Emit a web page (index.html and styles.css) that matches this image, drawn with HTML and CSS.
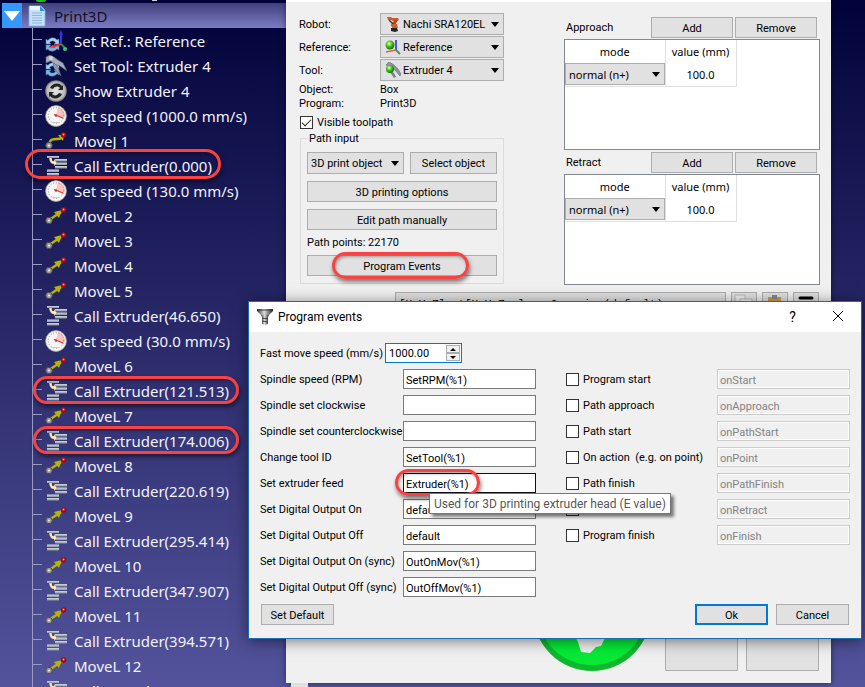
FILE: index.html
```
<!DOCTYPE html>
<html lang="en">
<head>
	<meta charset="UTF-8">
	<meta name="viewport" content="width=device-width, initial-scale=1.0">
	<title>Program events</title>
	<link rel="stylesheet" href="styles.css">
</head>
<body>
	<!-- shared icons -->
	<svg class="defs" width="0" height="0" aria-hidden="true">
		<defs>
			<linearGradient id="bar" x1="0" y1="0" x2="0" y2="1">
				<stop offset="0" stop-color="#d3dae2"/>
				<stop offset="1" stop-color="#8a949e"/>
			</linearGradient>
			<linearGradient id="metal" x1="0" y1="0" x2="1" y2="0">
				<stop offset="0" stop-color="#333"/>
				<stop offset=".45" stop-color="#ddd"/>
				<stop offset="1" stop-color="#222"/>
			</linearGradient>
			<radialGradient id="silver">
				<stop offset="0" stop-color="#e8e8e8"/>
				<stop offset=".8" stop-color="#bbb"/>
				<stop offset="1" stop-color="#777"/>
			</radialGradient>
			<radialGradient id="ball" cx=".4" cy=".35" r=".6">
				<stop offset="0" stop-color="#eaffd0"/>
				<stop offset=".5" stop-color="#4fc81e"/>
				<stop offset="1" stop-color="#1d7a08"/>
			</radialGradient>
		</defs>
		<symbol id="i-cycle" viewBox="0 0 22 22">
			<path d="M1 14V9l2 1.500C5 7 10 7 12 10l2-1v5H9l1.500-1.500C9 10.500 6 10.500 4.500 12.500L6 14z" fill="#a9d2ef" stroke="#3d7fae" stroke-width=".5"/>
			<path d="M14 15v5l-2-1.200C10 22 4 22 3 19l-2 1v-5h5l-1.500 1.500c1.500 2 4.500 2 6 0L9 15z" fill="#7fb5dd" stroke="#3d7fae" stroke-width=".5"/>
		</symbol>
		<symbol id="i-ref" viewBox="0 0 22 22">
			<use href="#i-cycle"/>
			<path d="M16 14V3" stroke="#2a35ee" stroke-width="2"/>
			<path d="M16 0l2 5h-4z" fill="#2a35ee"/>
			<path d="M16 14L7 17" stroke="#e33" stroke-width="2"/>
			<path d="M3 18l5-3 1 3z" fill="#f44"/>
			<path d="M16 14l5 5" stroke="#2a8a5a" stroke-width="2"/>
			<circle cx="20" cy="19" r="2" fill="#3fc37c"/>
		</symbol>
		<symbol id="i-tool" viewBox="0 0 22 22">
			<use href="#i-cycle"/>
			<path d="M1 2l4-2 4 2 4 3 5 3 4 8-7-5-6-2-3-3-5 2z" fill="#a8abba" stroke="#555b70" stroke-width=".6"/>
			<path d="M9 8l4 4 3 9-5-5-3-5z" fill="#9499ad" stroke="#555b70" stroke-width=".6"/>
			<circle cx="6" cy="3" r="2" fill="#d4d6df"/>
		</symbol>
		<symbol id="i-show" viewBox="0 0 22 22">
			<circle cx="11" cy="11" r="10.800" fill="url(#silver)"/>
			<path d="M5 8c2-5 9-6 12-2l1-1v5h-5l2-2c-2-2-5-2-7 1z" fill="#222"/>
			<path d="M17 14c-2 5-9 6-12 2l-1 1v-5h5l-2 2c2 2 5 2 7-1z" fill="#222"/>
		</symbol>
		<symbol id="i-speed" viewBox="0 0 22 22">
			<circle cx="11" cy="11" r="10.400" fill="#f6f6f4" stroke="#aaa" stroke-width=".8"/>
			<path d="M11 10l2-8c6 1 8 7 6 12z" fill="#f9c4c4"/>
			<circle cx="11" cy="10.500" r="7.800" fill="none" stroke="#888" stroke-dasharray="1 1.800"/>
			<path d="M9 9.500l9 3.500" stroke="#d33" stroke-width="1.200"/>
			<circle cx="11" cy="10.500" r="1.200" fill="#c33"/>
			<path d="M7 17.500h8" stroke="#ccc"/>
		</symbol>
		<symbol id="i-movej" viewBox="0 0 22 22">
			<path d="M4 15c1-6 3-6 8-6 4 0 5-1 6-4" fill="none" stroke="#b8b400" stroke-width="2.500"/>
			<path d="M13 5l6 0-1 6z" fill="#b8b400"/>
			<circle cx="4" cy="15.500" r="3.200" fill="#999" stroke="#4c4c50"/>
			<circle cx="4" cy="15.500" r="1" fill="#eee"/>
			<circle cx="18.500" cy="5" r="2.800" fill="#a80a14"/>
			<circle cx="18.500" cy="4.500" r="1" fill="#f99"/>
		</symbol>
		<symbol id="i-movel" viewBox="0 0 22 22">
			<path d="M4 15l12-8" stroke="#b8b400" stroke-width="2.500"/>
			<path d="M9 7l8-2-3 8z" fill="#b8b400"/>
			<circle cx="4" cy="15.500" r="3.200" fill="#999" stroke="#4c4c50"/>
			<circle cx="4" cy="15.500" r="1" fill="#eee"/>
			<circle cx="18.500" cy="5" r="2.800" fill="#a80a14"/>
			<circle cx="18.500" cy="4.500" r="1" fill="#f99"/>
		</symbol>
		<symbol id="i-call" viewBox="0 0 22 22">
			<g fill="url(#bar)">
				<rect x="2" y="1" width="12" height="2"/>
				<rect x="10" y="4" width="12" height="2.500"/>
				<rect x="10" y="7.500" width="12" height="2.500"/>
				<rect x="10" y="11" width="12" height="2.500"/>
				<rect x="2" y="14.500" width="12" height="2.500"/>
				<rect x="2" y="18" width="12" height="2.500"/>
			</g>
			<path d="M4 3h3c0 3 0 3 2 3V4l3 4-3 3V9C6 9 5 7 4 3z" fill="#fdebc4" stroke="#6b5a3a" stroke-width=".3"/>
		</symbol>
		<symbol id="i-doc" viewBox="0 0 18 22">
			<path d="M1 1h12l4 4v16H1z" fill="#c5e2f8" stroke="#7db3dc" stroke-width=".8"/>
			<path d="M2 1h10v4H2z" fill="#e9f5ff"/>
			<path d="M12 1l5 5h-5z" fill="#2f8be8"/>
			<path d="M4 8h10M4 10.500h10M4 13h10M4 15.500h10M4 18h10" stroke="#8fb5d8"/>
		</symbol>
		<symbol id="i-robot" viewBox="0 0 16 16">
			<path d="M2 1h4l1 1h6l1 2-2 1H8L6 4H3z" fill="#c9602f"/>
			<path d="M11 3l2 1-3 5-4 1 1-3z" fill="#b0481f"/>
			<path d="M4 4l4 4" stroke="#5b2a18" stroke-width="1.500"/>
			<path d="M6 8h6l1 4H7z" fill="#c9602f"/>
			<path d="M6 12h6l1 3-3 1-4-1z" fill="#222"/>
		</symbol>
		<symbol id="i-frame" viewBox="0 0 16 16">
			<path d="M11 11V1" stroke="#4a55e0" stroke-width="2"/>
			<path d="M11 11L1 13" stroke="#e55" stroke-width="1.500"/>
			<path d="M11 11l4 4" stroke="#3a9a6a" stroke-width="2"/>
			<circle cx="5" cy="6" r="4.500" fill="url(#ball)"/>
		</symbol>
		<symbol id="i-grip" viewBox="0 0 16 16">
			<path d="M1 3l3-3 5 3 4 4 3 5-1 2-5-6-5-3z" fill="#8e93a6" stroke="#5a6074" stroke-width=".6"/>
			<path d="M6 9l3 2 2 4-2 1-4-6z" fill="#777d92"/>
			<circle cx="5" cy="7" r="4" fill="url(#ball)"/>
		</symbol>
	</svg>

	<div class="desktop">
		<nav class="tree">
			<div class="above"><i></i><b></b></div>
			<div class="root">
				<button class="toggle" aria-label="Collapse"></button>
				<div class="selected">
					<svg class="doc"><use href="#i-doc"/></svg>
					<span>Print3D</span>
				</div>
			</div>
			<ul>
				<li><svg><use href="#i-ref"/></svg>Set Ref.: Reference</li>
				<li><svg><use href="#i-tool"/></svg>Set Tool: Extruder 4</li>
				<li><svg><use href="#i-show"/></svg>Show Extruder 4</li>
				<li><svg><use href="#i-speed"/></svg>Set speed (1000.0 mm/s)</li>
				<li><svg><use href="#i-movej"/></svg>MoveJ 1</li>
				<li class="marked wide"><svg><use href="#i-call"/></svg>Call Extruder(0.000)</li>
				<li><svg><use href="#i-speed"/></svg>Set speed (130.0 mm/s)</li>
				<li><svg><use href="#i-movel"/></svg>MoveL 2</li>
				<li><svg><use href="#i-movel"/></svg>MoveL 3</li>
				<li><svg><use href="#i-movel"/></svg>MoveL 4</li>
				<li><svg><use href="#i-movel"/></svg>MoveL 5</li>
				<li><svg><use href="#i-call"/></svg>Call Extruder(46.650)</li>
				<li><svg><use href="#i-speed"/></svg>Set speed (30.0 mm/s)</li>
				<li><svg><use href="#i-movel"/></svg>MoveL 6</li>
				<li class="marked"><svg><use href="#i-call"/></svg>Call Extruder(121.513)</li>
				<li><svg><use href="#i-movel"/></svg>MoveL 7</li>
				<li class="marked"><svg><use href="#i-call"/></svg>Call Extruder(174.006)</li>
				<li><svg><use href="#i-movel"/></svg>MoveL 8</li>
				<li><svg><use href="#i-call"/></svg>Call Extruder(220.619)</li>
				<li><svg><use href="#i-movel"/></svg>MoveL 9</li>
				<li><svg><use href="#i-call"/></svg>Call Extruder(295.414)</li>
				<li><svg><use href="#i-movel"/></svg>MoveL 10</li>
				<li><svg><use href="#i-call"/></svg>Call Extruder(347.907)</li>
				<li><svg><use href="#i-movel"/></svg>MoveL 11</li>
				<li><svg><use href="#i-call"/></svg>Call Extruder(394.571)</li>
				<li><svg><use href="#i-movel"/></svg>MoveL 12</li>
				<li><svg><use href="#i-call"/></svg>Call Extruder(438.515)</li>
			</ul>
		</nav>

		<div class="right">
			<main class="panel">
				<div class="columns">
					<section class="setup">
						<div class="fields">
							<label for="robot">Robot:</label>
							<div class="combo icon">
								<svg><use href="#i-robot"/></svg>
								<select id="robot"><option>Nachi SRA120EL</option></select>
							</div>
							<label for="reference">Reference:</label>
							<div class="combo icon">
								<svg><use href="#i-frame"/></svg>
								<select id="reference"><option>Reference</option></select>
							</div>
							<label for="tool">Tool:</label>
							<div class="combo icon">
								<svg><use href="#i-grip"/></svg>
								<select id="tool"><option>Extruder 4</option></select>
							</div>
						</div>
						<div class="fields facts">
							<span>Object:</span><span>Box</span>
							<span>Program:</span><span>Print3D</span>
						</div>
						<label class="check"><input type="checkbox" checked>Visible toolpath</label>
						<fieldset>
							<legend>Path input</legend>
							<div class="pair">
								<div class="combo">
									<select aria-label="Path input type"><option>3D print object</option></select>
								</div>
								<button>Select object</button>
							</div>
							<button>3D printing options</button>
							<button>Edit path manually</button>
							<p>Path points: 22170</p>
							<button class="events">Program Events</button>
						</fieldset>
					</section>

					<section class="moves">
						<div class="head">
							<h2>Approach</h2>
							<button>Add</button>
							<button>Remove</button>
						</div>
						<div class="box">
							<table>
								<tr><th>mode</th><th>value (mm)</th></tr>
								<tr>
									<td><div class="combo"><select aria-label="Approach mode"><option>normal (n+)</option></select></div></td>
									<td>100.0</td>
								</tr>
							</table>
						</div>
						<div class="head">
							<h2>Retract</h2>
							<button>Add</button>
							<button>Remove</button>
						</div>
						<div class="box">
							<table>
								<tr><th>mode</th><th>value (mm)</th></tr>
								<tr>
									<td><div class="combo"><select aria-label="Retract mode"><option>normal (n+)</option></select></div></td>
									<td>100.0</td>
								</tr>
							</table>
						</div>
					</section>
				</div>

				<div class="config">
					<select class="mono" aria-label="Configuration"><option>[X,Y,Z]rot[X,Y,Z,w]... Generic (default)</option></select>
					<button aria-label="Copy"><svg viewBox="0 0 20 20"><path d="M1 1h10v12H1z" fill="#eee" stroke="#bbb"/><path d="M6 5h12v13H6z" fill="#f5f5f5" stroke="#bbb"/></svg></button>
					<button aria-label="Paste"><svg viewBox="0 0 20 20"><path d="M3 3h13v15H3z" fill="#d39a4e"/><path d="M7 1h5v4H7z" fill="#888"/><path d="M8 8h9v10H8z" fill="#fff"/></svg></button>
					<button aria-label="Remove configuration"><svg viewBox="0 0 20 20"><path d="M4 4h12" stroke="#000" stroke-width="3" stroke-linecap="round"/></svg></button>
				</div>

				<div class="foot">
					<svg class="go" viewBox="0 0 118 118">
						<circle cx="59" cy="59" r="59" fill="#0fb92e"/>
						<circle cx="59" cy="57" r="55" fill="#06ea36"/>
						<path d="M40 80l5 9 3 10 9 1 6-6 5-1 4-8-1-5z" fill="#efefef"/>
					</svg>
					<button aria-label="Update"></button>
					<button aria-label="Simulate"></button>
				</div>
			</main>
			<div class="peek"></div>
		</div>

		<div class="dialog" role="dialog" aria-labelledby="title">
			<header>
				<svg viewBox="0 0 16 16">
					<path d="M0 0h16v2l-4 4H4L0 2z" fill="url(#metal)"/>
					<path d="M4 6h8l-1 2v7l-3 1-3-1V8z" fill="url(#metal)"/>
					<path d="M0 1h16M5 9l6 1M5 12l6 1" stroke="#222" stroke-width=".8"/>
				</svg>
				<h1 id="title">Program events</h1>
				<button aria-label="Help">?</button>
				<button aria-label="Close"><svg viewBox="0 0 12 12"><path d="M1 1l10 10M11 1L1 11" stroke="#000"/></svg></button>
			</header>
			<form>
				<div class="speed">
					<label for="fast">Fast move speed (mm/s)</label>
					<div class="spin">
						<input id="fast" type="number" step="0.01" value="1000.00">
						<div>
							<button type="button" class="up" aria-label="Increase"></button>
							<button type="button" class="down" aria-label="Decrease"></button>
						</div>
					</div>
				</div>
				<div class="sets">
					<div class="commands">
						<label for="rpm">Spindle speed (RPM)</label><input id="rpm" type="text" value="SetRPM(%1)">
						<label for="cw">Spindle set clockwise</label><input id="cw" type="text">
						<label for="ccw">Spindle set counterclockwise</label><input id="ccw" type="text">
						<label for="toolid">Change tool ID</label><input id="toolid" type="text" value="SetTool(%1)">
						<label for="feed">Set extruder feed</label>
						<div class="feed">
							<input id="feed" type="text" value="Extruder(%1)">
							<div class="tip" role="tooltip">Used for 3D printing extruder head (E value)</div>
						</div>
						<label for="don">Set Digital Output On</label><input id="don" type="text" value="default">
						<label for="doff">Set Digital Output Off</label><input id="doff" type="text" value="default">
						<label for="dons">Set Digital Output On (sync)</label><input id="dons" type="text" value="OutOnMov(%1)">
						<label for="doffs">Set Digital Output Off (sync)</label><input id="doffs" type="text" value="OutOffMov(%1)">
					</div>
					<div class="hooks">
						<label class="check"><input type="checkbox">Program start</label><input type="text" value="onStart" aria-label="Program start call" disabled>
						<label class="check"><input type="checkbox">Path approach</label><input type="text" value="onApproach" aria-label="Path approach call" disabled>
						<label class="check"><input type="checkbox">Path start</label><input type="text" value="onPathStart" aria-label="Path start call" disabled>
						<label class="check"><input type="checkbox">On action&nbsp; (e.g. on point)</label><input type="text" value="onPoint" aria-label="On action call" disabled>
						<label class="check"><input type="checkbox">Path finish</label><input type="text" value="onPathFinish" aria-label="Path finish call" disabled>
						<label class="check"><input type="checkbox" aria-label="Retract"></label><input type="text" value="onRetract" aria-label="Retract call" disabled>
						<label class="check"><input type="checkbox">Program finish</label><input type="text" value="onFinish" aria-label="Program finish call" disabled>
					</div>
				</div>
				<div class="actions">
					<button type="button">Set Default</button>
					<button type="button" class="ok">Ok</button>
					<button type="button">Cancel</button>
				</div>
			</form>
		</div>
	</div>
</body>
</html>
```
FILE: styles.css
```
*{
	margin:0;
	padding:0;
	box-sizing: border-box;
}
body{
	font-family: Roboto, "Noto Sans", sans-serif;
	font-size: 11px;
	color: #000;
}
input, select, button{
	font: inherit;
	color: inherit;
}
.defs{
	position: absolute;
}
.desktop{
	position: relative;
	display: flex;
	height: 100vh;
	overflow: hidden;
	background: linear-gradient(#02023a, #53539c);
}

/* station tree */
.tree{
	flex: none;
	width: 286px;
	font-family: "Noto Sans", "Open Sans", sans-serif;
	font-size: 15px;
	color: #f2f2f8;
}
.above{
	display: flex;
	height: 3px;
	padding-left: 36px;
	overflow: hidden;
}
.above i{
	width: 10px;
	height: 2px;
	border-radius: 0 0 6px 6px;
	background: #10c010;
}
.above b{
	width: 5px;
	height: 1px;
	margin-left: 106px;
	background: #ccd;
}
.root{
	display: flex;
	height: 25px;
	padding-left: 2px;
}
.toggle{
	width: 20px;
	height: 25px;
	border: none;
	background: #3399ff;
}
.toggle::before{
	content: "";
	display: block;
	margin: 0 auto;
	width: 0;
	border: 8px solid transparent;
	border-top: 10px solid #fff;
	border-bottom: none;
}
.selected{
	flex: 1;
	display: flex;
	align-items: center;
	gap: 8px;
	padding-left: 6px;
	background: linear-gradient(#40407c, #7c7cc4);
	color: #111122;
}
.doc{
	width: 18px;
	height: 22px;
}
.tree ul{
	list-style: none;
	margin-left: 32px;
	border-left: 1px solid #9a9ac0;
}
.tree li{
	position: relative;
	display: flex;
	align-items: center;
	height: 25px;
	white-space: nowrap;
}
.tree li::before{
	content: "";
	width: 9px;
	height: 1px;
	margin-right: 3px;
	margin-bottom: 2px;
	background: #9a9ac0;
}
.tree li svg{
	width: 22px;
	height: 22px;
	margin-right: 7px;
}

/* red call-outs */
.marked::after, .events::after, .feed::after{
	content: "";
	position: absolute;
	box-sizing: border-box;
	border: 3px solid #f94242;
	border-radius: 15px;
	box-shadow: 1px 3px 4px rgba(0,0,0,.5), inset 1px 2px 3px rgba(0,0,0,.3);
	pointer-events: none;
}
.tree .marked::after{
	top: -2px;
	bottom: -1px;
	left: 0;
	width: 206px;
}
.tree .wide::after{
	top: -4px;
	left: -8px;
	width: 196px;
}

/* print project panel */
.right{
	flex: 1;
	display: flex;
	flex-direction: column;
	margin-right: 34px;
}
.panel{
	flex: 1;
	display: flex;
	flex-direction: column;
	border-top: 2px solid #fff;
	background: #f0f0f0;
	box-shadow: 0 0 6px rgba(0,0,0,.5);
}
.peek{
	width: 17px;
	height: 4px;
	margin-left: 5px;
	background: #e0e0e0;
}
.columns{
	display: flex;
	justify-content: space-between;
	padding: 11px 11px 0 13px;
}
.setup{
	width: 205px;
}
.fields{
	display: grid;
	grid-template-columns: 81px 1fr;
	row-gap: 1px;
	align-items: center;
}
.facts{
	row-gap: 0;
	line-height: 14px;
	padding: 2px 0 4px;
}
.combo{
	position: relative;
}
.combo::after{
	content: "";
	position: absolute;
	right: 5px;
	top: 9px;
	border: 4px solid transparent;
	border-top: 5px solid #000;
	border-bottom: none;
	pointer-events: none;
}
.combo svg{
	position: absolute;
	left: 5px;
	top: 3px;
	width: 16px;
	height: 16px;
}
select{
	display: block;
	width: 100%;
	height: 22px;
	padding: 1px 0 0 3px;
	border: 1px solid #adadad;
	background: #e1e1e1;
	appearance: none;
}
.icon select{
	padding-left: 22px;
}
button{
	height: 21px;
	padding-top: 1px;
	border: 1px solid #adadad;
	background: #e1e1e1;
}
.check{
	display: flex;
	align-items: center;
	gap: 4px;
	line-height: 15px;
	white-space: pre;
}
.check input{
	width: 13px;
	height: 13px;
	border: 1px solid #333;
	background: #fff;
	appearance: none;
}
.check input:checked::before{
	content: "";
	display: block;
	width: 8px;
	height: 4px;
	margin: 2px 1px;
	border-left: 1px solid #222;
	border-bottom: 1px solid #222;
	transform: rotate(-45deg);
}
.setup .check{
	margin-left: 1px;
}
fieldset{
	display: flex;
	flex-direction: column;
	gap: 7px;
	margin: 1px 0 0 1px;
	padding: 6px 6px 7px 6px;
	border: 1px solid #dcdcdc;
}
legend{
	margin-left: 1px;
	padding: 0 1px;
	line-height: 15px;
}
fieldset p{
	line-height: 11px;
}
.pair{
	display: flex;
	gap: 6px;
}
.pair > *{
	flex: 1 1 98px;
}
.pair button{
	flex-basis: 88px;
	height: 22px;
}
.events{
	position: relative;
}
.events::after{
	top: -4px;
	bottom: -4px;
	left: 24px;
	right: 27px;
}
.moves{
	width: 256px;
}
.head{
	display: flex;
	gap: 2px;
	padding: 4px 3px 1px 2px;
}
.head h2{
	flex: 1;
	font-size: 11px;
	font-weight: normal;
	line-height: 21px;
}
.head button{
	width: 82px;
}
.box{
	height: 111px;
	margin-bottom: -2px;
	border: 1px solid #828790;
	background: #fff;
	font-family: "Noto Sans", "Open Sans", sans-serif;
}
.box table{
	border-collapse: collapse;
	text-align: center;
}
.box th, .box td{
	height: 23px;
	font-weight: normal;
}
.box td:first-child{
	width: 100px;
	text-align: left;
}
.box select{
	padding-top: 0;
}
.box th:last-child, .box td:last-child{
	width: 71px;
	border: 1px solid #e0e0e0;
	border-width: 0 1px;
}
.box tr:last-child{
	border-bottom: 1px solid #e0e0e0;
}
.config{
	display: grid;
	grid-template-columns: 1fr 26px 26px 26px;
	gap: 5px;
	margin: 8px 12px 0 109px;
}
.config button svg{
	width: 20px;
	height: 20px;
}
.mono{
	font-family: "Liberation Mono", monospace;
}
.foot{
	flex: 1;
	display: flex;
	align-items: flex-end;
	gap: 8px;
	padding: 0 12px 12px 0;
}
.foot button{
	width: 73px;
	height: 60px;
}
.go{
	width: 118px;
	height: 118px;
	margin-left: auto;
	margin-right: 6px;
}

/* program events dialog */
.dialog{
	position: absolute;
	top: 301px;
	left: 248px;
	right: 3px;
	border: 1px solid #1a6cb0;
	background: #f0f0f0;
	box-shadow: 0 2px 14px rgba(0,0,0,.5);
}
.dialog header{
	display: flex;
	align-items: center;
	height: 30px;
	padding: 0 1px 0 8px;
	background: #fff;
}
.dialog header > svg{
	width: 16px;
	height: 16px;
	margin-right: 5px;
}
.dialog h1{
	flex: 1;
	font-size: 12px;
	font-weight: normal;
}
.dialog header button{
	width: 45px;
	height: 30px;
	padding: 0;
	border: none;
	background: none;
	font-size: 14px;
}
.dialog header button svg{
	width: 12px;
	height: 12px;
}
form{
	padding: 11px 11px 13px 11px;
}
form label{
	padding-top: 1px;
}
.speed{
	display: flex;
	align-items: center;
	gap: 2px;
	margin-bottom: 6px;
}
.spin{
	display: flex;
	width: 77px;
	height: 20px;
	padding: 1px;
	border: 1px solid #0078d7;
	background: #fff;
}
.spin input{
	flex: 1;
	min-width: 0;
	padding: 1px 0 0 2px;
	border: none;
	outline: none;
	appearance: textfield;
}
.spin input::-webkit-inner-spin-button{
	appearance: none;
}
.spin > div{
	display: flex;
	flex-direction: column;
}
.spin button{
	width: 14px;
	height: 8px;
	padding: 0;
	background: #f0f0f0;
}
.spin button::before{
	content: "";
	display: block;
	width: 0;
	margin: 0 auto;
	border: 3px solid transparent;
}
.spin .up::before{
	border-top: none;
	border-bottom-color: #000;
}
.spin .down::before{
	border-bottom: none;
	border-top-color: #000;
}
.sets{
	display: flex;
	gap: 30px;
}
.commands, .hooks{
	display: grid;
	grid-auto-rows: 20px;
	row-gap: 6px;
	align-items: center;
}
.commands{
	grid-template-columns: 143px 133px;
	white-space: nowrap;
}
.hooks{
	flex: 1;
	grid-template-columns: 1fr 133px;
	align-content: start;
}
.hooks .check{
	padding: 0;
}
input[type="text"]{
	width: 100%;
	height: 20px;
	padding: 2px 2px 0;
	border: 1px solid #7a7a7a;
	background: #fff;
}
input[type="text"]:disabled{
	border-color: #ccc;
	background: #f0f0f0;
	box-shadow: inset 0 0 0 1px #fff;
	color: #838383;
}
.feed{
	position: relative;
}
.feed input[type="text"]{
	border-color: #111;
}
.feed::after{
	top: -4px;
	bottom: -3px;
	left: -8px;
	width: 85px;
}
.tip{
	position: absolute;
	z-index: 1;
	top: 20px;
	left: 26px;
	padding: 1px 4px 0;
	border: 1px solid #767676;
	background: #fff;
	color: #575757;
	font-size: 12px;
	line-height: 18px;
	box-shadow: 3px 3px 3px rgba(0,0,0,.5);
}
.actions{
	display: flex;
	gap: 8px;
	padding: 7px 1px 0 1px;
}
.actions button{
	width: 73px;
}
.actions .ok{
	margin-left: auto;
	border: 2px solid #0078d7;
}
```
